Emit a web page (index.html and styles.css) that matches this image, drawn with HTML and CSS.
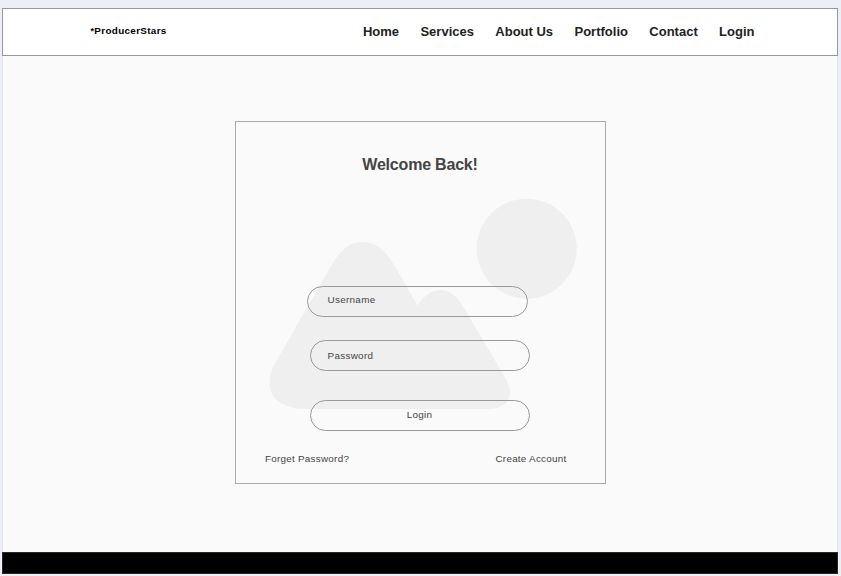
FILE: index.html
```html
<!DOCTYPE html>
<html lang="en">
<head>
<meta charset="utf-8">
<title>ProducerStars</title>
<link rel="stylesheet" href="styles.css">
</head>
<body>
<div class="page">
  <header class="header">
    <div class="logo"><span class="star">*</span>ProducerStars</div>
    <nav class="nav">
      <a>Home</a><a>Services</a><a>About Us</a><a>Portfolio</a><a>Contact</a><a>Login</a>
    </nav>
  </header>
  <main class="main">
    <section class="card">
      <svg class="art" viewBox="235 121 370 362" aria-hidden="true">
        <circle cx="526.7" cy="248.7" r="50"/>
        <path d="M273 367L331 266C341 249 350 242 362.500 242C375 242 385 249 394 265L417.500 305.500C424 296 431 290 440.500 290C450 290 458 297 464 308L503 374C507 381 510 387 510 392C510 403 501 409 487 409L306 409C283 409 269.500 398 269.500 383C269.500 378 271 372 273 367Z"/>
      </svg>
      <h1 class="title">Welcome Back!</h1>
      <form class="form">
        <div class="pill username">Username</div>
        <div class="pill password">Password</div>
        <div class="pill submit">Login</div>
      </form>
      <div class="links"><a>Forget Password?</a><a>Create Account</a></div>
    </section>
  </main>
  <footer class="footer"></footer>
</div>
</body>
</html>
```
FILE: styles.css
```css
* { box-sizing: border-box; }
body {
  margin: 0;
  height: 576px;
  overflow: hidden;
  padding: 8px 3px 0 2px;
  background: #ecf0f6;
  font-family: "Liberation Sans", Arial, sans-serif;
}
.page { height: 568px; display: flex; flex-direction: column; }
.header {
  height: 48px;
  flex: none;
  display: flex;
  justify-content: space-between;
  align-items: center;
  padding: 0 82.500px 0 87.500px;
  background: #fff;
  border: 1px solid #999;
}
.logo {
  font-size: 9.900px;
  font-weight: 700;
  line-height: 12px;
  letter-spacing: .33px;
  color: #000;
  margin-top: -2px;
}
.star { font-size: 9px; }
.nav {
  display: flex;
  gap: 21.400px;
  font-size: 13px;
  font-weight: 700;
  line-height: 16px;
  color: #222;
}
.main {
  flex: none;
  height: 496px;
  display: flex;
  justify-content: center;
  padding-top: 65px;
  background: #fafafa;
  border: solid #e2e5e9;
  border-width: 0 1px;
}
.card {
  position: relative;
  width: 371px;
  height: 363px;
  border: 1px solid #aaa;
  color: #444;
}
.art {
  position: absolute;
  left: -1px;
  top: -1px;
  width: 370px;
  height: 362px;
  fill: #efefef;
}
.title {
  position: relative;
  margin: 33px 0 0;
  font-size: 16px;
  line-height: 20px;
  letter-spacing: -.2px;
  text-align: center;
}
.form {
  position: relative;
  margin: 111px 0 0 74px;
}
.pill {
  width: 220px;
  height: 31px;
  border: 1px solid #999;
  border-radius: 16px;
  padding-left: 17px;
  font-size: 9.900px;
  line-height: 29px;
  letter-spacing: .3px;
}
.username { width: 221px; margin-left: -3px; padding-left: 20px; line-height: 26px; }
.password { margin-top: 23px; }
.submit { margin-top: 29px; padding: 0; line-height: 28px; text-align: center; }
.links {
  position: relative;
  display: flex;
  justify-content: space-between;
  margin: 21px 38px 0 29.500px;
  font-size: 9.900px;
  line-height: 14px;
  letter-spacing: .25px;
}
.footer {
  flex: none;
  height: 22px;
  background: #000;
  border: 1px solid #26282b;
}
```
